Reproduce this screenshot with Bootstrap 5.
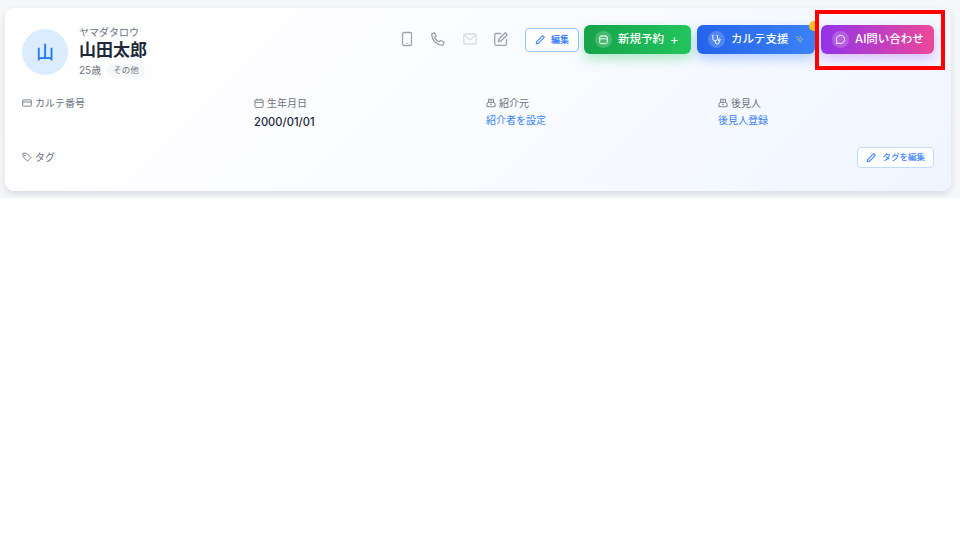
<!DOCTYPE html>
<html lang="ja">
<head>
<meta charset="utf-8">
<title>患者カード</title>
<link href="https://cdn.jsdelivr.net/npm/bootstrap@5.3.0/dist/css/bootstrap.min.css" rel="stylesheet">
<style>
html,body{background:#fff;font-family:Inter,"Noto Sans CJK JP",sans-serif;}
.band{background:#f5f7fa;height:198px;padding:8px 9px 7px 5px;}
.pcard{height:183px;border-radius:9px;padding:17px 17px 0;background:linear-gradient(135deg,#fff 0%,#fbfcff 45%,#eff5ff 100%);box-shadow:0 3px 7px rgba(30,41,59,.13);}
.toprow{height:58px;}
.avatar{width:46px;height:46px;margin-top:4px;margin-right:4px;background:#dcecff;color:#1d7bf5;font-size:18px;font-weight:500;border-radius:50%;}
.namebox{margin-left:-1px;}
.kana{font-size:10px;line-height:12px;color:#6b7280;margin-top:1px;}
.pname{font-size:17px;line-height:24px;font-weight:700;color:#1f2937;margin:0;}
.agerow{gap:6px;}
.age{font-size:10px;color:#6b7280;line-height:16px;}
.sex{font-size:8.500px;line-height:13px;color:#6b7280;background:#f6f7f9;border-radius:7px;padding:0 6px;}
.tool{width:16px;height:16px;display:block;}
.tools{gap:15.300px;margin-right:16px;margin-top:6px;margin-left:2px;}
.editb{height:24px;font-size:9px;font-weight:600;color:#3b82f6;background:#fff;border:1px solid #93c5fd;border-radius:4px;padding:0 9px;gap:5px;white-space:nowrap;}
.cta{height:29px;color:#fff;font-size:11.500px;font-weight:500;border:0;border-radius:6px;padding:0 11px;gap:6px;position:relative;white-space:nowrap;}
.ctas{gap:6px;margin-left:5px;}
.plus{font-size:13px;font-weight:400;line-height:1;}
.disc{width:17px;height:17px;border-radius:50%;background:rgba(255,255,255,.2);flex:none;}
.green{background:linear-gradient(90deg,#16a34a,#22c55e);box-shadow:0 5px 12px rgba(34,197,94,.35);width:107px;}
.blue{background:linear-gradient(90deg,#2563eb,#3b82f6);box-shadow:0 5px 12px rgba(59,130,246,.35);width:118px;}
.pink{background:linear-gradient(90deg,#9333ea,#ec4899);box-shadow:0 5px 12px rgba(168,85,247,.35);width:113px;}
.dot{position:absolute;top:-4px;right:-4px;width:10px;height:10px;border-radius:50%;background:#fbbf24;}
.infogrid{display:grid;grid-template-columns:repeat(4,1fr);column-gap:16px;margin-top:13px;height:46px;}
.lbl{font-size:10px;line-height:14px;color:#6b7280;gap:3px;}
.val{font-size:11.200px;line-height:14px;font-weight:500;color:#1f2937;margin-top:5px;}
.lnk{font-size:10px;line-height:14px;color:#3b82f6;text-decoration:none;margin-top:3px;display:block;}
.tagrow{margin-top:5px;}
.tagrow .lbl{margin-top:3px;}
.tagb{height:21px;font-size:8.500px;font-weight:500;color:#3b82f6;background:#fff;border:1px solid #bfdbfe;border-radius:4px;padding:0 8px;gap:5px;white-space:nowrap;}
.mark-red{position:absolute;left:815px;top:10px;width:130px;height:60px;border:4px solid #ff0000;pointer-events:none;}
</style>
</head>
<body class="m-0 position-relative">
<div class="band">
  <div class="pcard">
    <div class="d-flex justify-content-between toprow">
      <div class="d-flex gap-2">
        <div class="avatar d-flex align-items-center justify-content-center">山</div>
        <div class="namebox">
          <div class="kana">ヤマダタロウ</div>
          <h1 class="pname">山田太郎</h1>
          <div class="d-flex align-items-center agerow"><span class="age">25歳</span><span class="sex">その他</span></div>
        </div>
      </div>
      <div class="d-flex align-items-start">
        <div class="d-flex tools">
          <svg class="tool" viewBox="0 0 16 16" fill="none" stroke="#9ca3af" stroke-width="1.300"><rect x="3.500" y="1.500" width="9" height="13" rx="1.600"/><path d="M7.500 12.300h1"/></svg>
          <svg class="tool" viewBox="0 0 16 16" fill="none" stroke="#9ca3af" stroke-width="1.300" stroke-linejoin="round"><path d="M2 2.600 4.600 2l1.500 3.200-1.400 1.200c.8 2 2.500 3.700 4.500 4.500l1.200-1.400L14 11l-.6 2.600c-.2.500-.6.700-1 .7C6.500 14 2 9.500 1.700 3.600c0-.4.100-.8.300-1Z"/></svg>
          <svg class="tool" viewBox="0 0 16 16" fill="none" stroke="#d8dce3" stroke-width="1.300"><rect x="1.800" y="3" width="12.400" height="10" rx="1.200"/><path d="m2 4 6 5 6-5"/></svg>
          <svg class="tool" viewBox="0 0 16 16" fill="none" stroke="#9ca3af" stroke-width="1.300" stroke-linecap="round" stroke-linejoin="round"><path d="M7.500 2.500H3.200c-.9 0-1.500.6-1.500 1.500v8.800c0 .9.600 1.500 1.500 1.500H12c.9 0 1.500-.6 1.500-1.500V8.500"/><path d="M12.200 1.700l2 2L8 10l-2.600.6L6 8z"/></svg>
        </div>
        <div class="d-flex align-items-center" style="height:29px">
          <button class="btn editb d-flex align-items-center" type="button"><svg width="11" height="11" viewBox="0 0 16 16" fill="none" stroke="#3b82f6" stroke-width="1.500" stroke-linejoin="round"><path d="M11 2.500l2.500 2.500L5 13.500l-3.300.8.800-3.300z"/></svg>編集</button>
        </div>
        <div class="d-flex ctas">
          <button class="btn cta green d-flex align-items-center" type="button"><span class="disc d-flex align-items-center justify-content-center"><svg width="11" height="11" viewBox="0 0 16 16" fill="none" stroke="#fff" stroke-width="1.300"><rect x="2.500" y="3" width="11" height="11" rx="1.500"/><path d="M2.500 7h11M5.500 1.500V4M10.500 1.500V4"/></svg></span><span>新規予約</span><span class="plus">+</span></button>
          <button class="btn cta blue d-flex align-items-center" type="button"><span class="disc d-flex align-items-center justify-content-center"><svg width="11" height="11" viewBox="0 0 16 16" fill="none" stroke="#fff" stroke-width="1.400"><path d="M4 2H2.500v4.500a3.500 3.500 0 0 0 7 0V2H8"/><path d="M6 10v1.500a3 3 0 0 0 6 0V10"/><circle cx="12" cy="8.500" r="1.500"/></svg></span><span>カルテ支援</span><svg class="ms-0" width="11" height="11" viewBox="0 0 16 16" fill="none" stroke="#a7c4a8" stroke-width="1.200"><path d="M9 3l1.300 3.700L14 8l-3.700 1.300L9 13 7.700 9.300 4 8l3.700-1.300z"/><path d="M3.500 2.500v3M2 4h3"/></svg><span class="dot"></span></button>
          <button class="btn cta pink d-flex align-items-center" type="button"><span class="disc d-flex align-items-center justify-content-center"><svg width="11" height="11" viewBox="0 0 16 16" fill="none" stroke="#fff" stroke-width="1.400" stroke-linejoin="round"><path d="M8 2a6 6 0 1 1-2.700 11.400L2 14l.7-3.200A6 6 0 0 1 8 2z"/></svg></span><span>AI問い合わせ</span></button>
        </div>
      </div>
    </div>
    <div class="infogrid">
      <div><div class="lbl d-flex align-items-center"><svg width="10" height="10" viewBox="0 0 16 16" fill="none" stroke="#6b7280" stroke-width="1.400"><rect x="1" y="3" width="14" height="10" rx="1.500"/><path d="M1 6.500h14"/></svg>カルテ番号</div></div>
      <div><div class="lbl d-flex align-items-center"><svg width="10" height="10" viewBox="0 0 16 16" fill="none" stroke="#6b7280" stroke-width="1.400"><rect x="1.500" y="3" width="13" height="12" rx="1.500"/><path d="M1.500 7h13M5 1v3M11 1v3"/></svg>生年月日</div><div class="val">2000/01/01</div></div>
      <div><div class="lbl d-flex align-items-center"><svg width="10" height="10" viewBox="0 0 16 16" fill="none" stroke="#6b7280" stroke-width="1.400"><path d="M4 7V2h8v5M1.500 14V8.500L4 7h8l2.500 1.500V14z"/><path d="M6.500 4.500h3M6.500 10h3"/></svg>紹介元</div><a class="lnk" href="#">紹介者を設定</a></div>
      <div><div class="lbl d-flex align-items-center"><svg width="10" height="10" viewBox="0 0 16 16" fill="none" stroke="#6b7280" stroke-width="1.400"><path d="M4 7V2h8v5M1.500 14V8.500L4 7h8l2.500 1.500V14z"/><path d="M6.500 4.500h3M6.500 10h3"/></svg>後見人</div><a class="lnk" href="#">後見人登録</a></div>
    </div>
    <div class="d-flex justify-content-between align-items-start tagrow">
      <div class="lbl d-flex align-items-center"><svg width="10" height="10" viewBox="0 0 16 16" fill="none" stroke="#6b7280" stroke-width="1.400" stroke-linejoin="round"><path d="M1.500 2h6l7 7-5.500 5.500-7.500-7z"/><circle cx="5" cy="5.500" r=".8"/></svg>タグ</div>
      <button class="btn tagb d-flex align-items-center" type="button"><svg width="11" height="11" viewBox="0 0 16 16" fill="none" stroke="#3b82f6" stroke-width="1.500" stroke-linejoin="round"><path d="M11 2.500l2.500 2.500L5 13.500l-3.300.8.800-3.300z"/></svg>タグを編集</button>
    </div>
  </div>
</div>
<div class="mark-red"></div>
<script src="https://cdn.jsdelivr.net/npm/bootstrap@5.3.0/dist/js/bootstrap.bundle.min.js"></script>
</body>
</html>
